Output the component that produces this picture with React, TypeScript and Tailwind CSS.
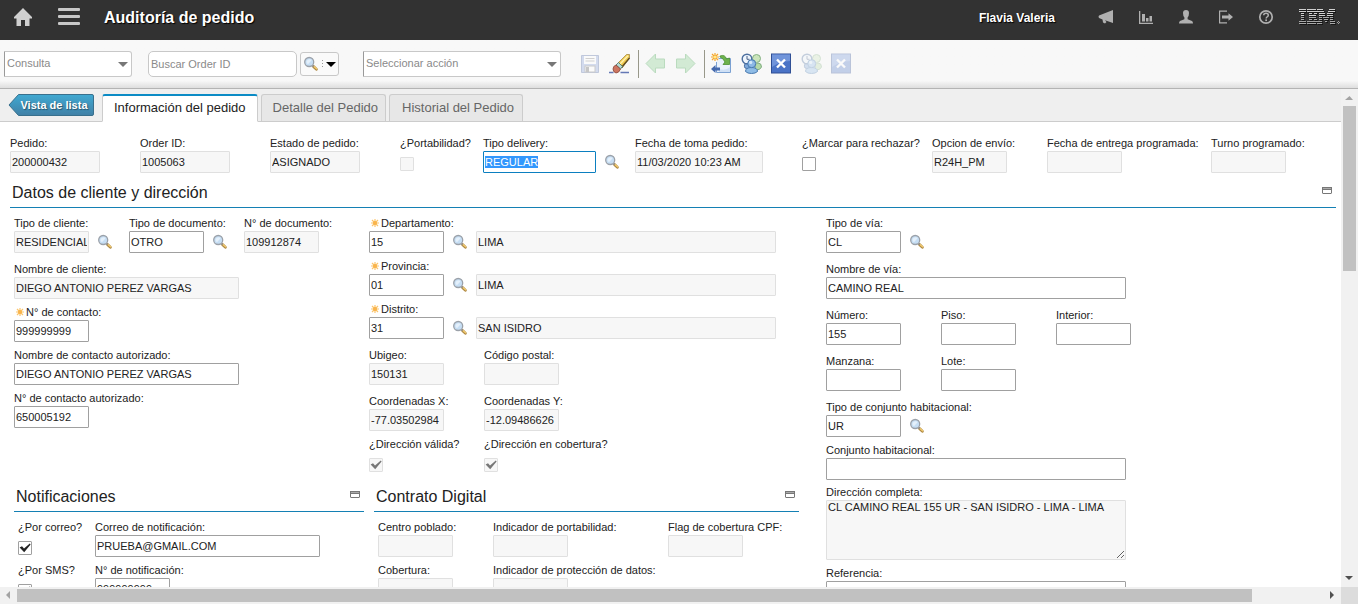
import { useEffect, useId, useRef } from "react";
import type { ReactNode } from "react";

const editable = "border-[#a0a0a0] bg-white";
const locked = "border-[#e0e0e0] bg-[#f7f7f7]";

function Lens() {
  return (
    <svg viewBox="0 0 16 16" className="size-4 shrink-0" aria-hidden="true">
      <path d="M10.6 10.6 L13.4 13.2" stroke="#b08a45" strokeWidth="2.8" strokeLinecap="round" />
      <path d="M11 10.4 L13.6 12.800" stroke="#f3cd72" strokeWidth="1.3" strokeLinecap="round" />
      <path d="M9.4 9.4 L10.6 10.6" stroke="#8a8a8a" strokeWidth="1.6" />
      <circle cx="6.2" cy="6" r="4.500" fill="#c6def4" stroke="#9ba1a9" strokeWidth="1.3" />
      <path d="M3.4 6 A3 3 0 0 1 8.6 4.2 L5 8.2 A3 3 0 0 1 3.4 6Z" fill="#e4f0fb" />
    </svg>
  );
}

function Star() {
  return (
    <svg viewBox="0 0 8 8" className="size-2 shrink-0" aria-hidden="true">
      <path d="M4 0V8M0 4H8M1 1L7 7M7 1L1 7" stroke="#fbc56d" strokeWidth="1.2" />
      <circle cx="4" cy="4" r="2.1" fill="#f9b44c" />
    </svg>
  );
}

type FieldProps = {
  label: string;
  value?: string;
  ro?: boolean;
  req?: boolean;
  lens?: boolean;
  width?: string;
  desc?: string;
  selected?: boolean;
};

function Field({ label, value = "", ro, req, lens, width = "w-[75px]", desc, selected }: FieldProps) {
  const id = useId();
  const ref = useRef<HTMLInputElement>(null);
  useEffect(() => {
    if (selected) {
      ref.current?.focus();
      ref.current?.select();
    }
  }, [selected]);
  return (
    <div>
      <label htmlFor={id} className={`flex h-4 items-center gap-0.5 whitespace-nowrap ${req ? "pl-0.5" : ""}`}>
        {req && <Star />}
        {label}
      </label>
      <div className="flex items-center gap-2">
        <input
          id={id}
          ref={ref}
          defaultValue={value}
          readOnly={ro}
          className={`h-[22px] shrink-0 rounded-[1px] border px-px outline-none selection:bg-[#3297fd] selection:text-white focus:border-[#0b7fc0] ${width} ${ro ? locked : editable}`}
        />
        {lens && (
          <button type="button" aria-label={`Buscar ${label}`}>
            <Lens />
          </button>
        )}
        {desc && (
          <input
            aria-label={`Descripción ${label}`}
            readOnly
            defaultValue={desc}
            className={`h-[22px] w-[300px] shrink-0 rounded-[1px] border px-px outline-none ${locked}`}
          />
        )}
      </div>
    </div>
  );
}

function Check({ label, checked, ro }: { label: string; checked?: boolean; ro?: boolean }) {
  const id = useId();
  return (
    <div>
      <label htmlFor={id} className="flex h-4 items-center whitespace-nowrap">
        {label}
      </label>
      <div className="relative mt-1.5 size-3.5">
        <input
          id={id}
          type="checkbox"
          defaultChecked={checked}
          disabled={ro}
          className={`peer block size-3.5 appearance-none rounded-[1px] border ${ro ? locked : editable}`}
        />
        <svg
          viewBox="0 0 14 14"
          className={`pointer-events-none absolute inset-0 hidden size-3.5 peer-checked:block ${ro ? "text-[#777]" : "text-[#222]"}`}
          aria-hidden="true"
        >
          <path d="M1.6 6.4 L4 5.2 L6 7.4 L11.8 2.4 L12.6 3.4 L6.2 11.2 Z" fill="currentColor" />
        </svg>
      </div>
    </div>
  );
}

function Heading({ children }: { children: ReactNode }) {
  return (
    <div className="flex h-7 justify-between border-b border-[#1480b4] pr-1 pl-0.5">
      <h2 className="text-base leading-[26px]">{children}</h2>
      <button type="button" aria-label="Contraer sección" className="mt-1.5 h-2">
        <svg viewBox="0 0 10 7" className="h-[7px] w-2.5" aria-hidden="true">
          <rect x=".5" y=".5" width="9" height="6" rx=".5" fill="#fff" stroke="#777" />
          <rect x="0" y="0" width="10" height="3" fill="#777" />
          <rect x="1" y="1" width="8" height="1" fill="#aaa" />
        </svg>
      </button>
    </div>
  );
}

function Combo({ label, width }: { label: string; width: string }) {
  return (
    <div className={`relative ${width}`}>
      <select
        aria-label={label}
        className="h-[26px] w-full appearance-none rounded-r-[3px] border border-[#c8c8c8] border-l-[#999] bg-white px-0.5 text-[#8a8a8a] outline-none"
      >
        <option>{label}</option>
      </select>
      <svg viewBox="0 0 10 5" className="pointer-events-none absolute top-[11px] right-1 h-[5px] w-2.5" aria-hidden="true">
        <path d="M0 0H10L5 5Z" fill="#777" />
      </svg>
    </div>
  );
}

function Tool({ label, dim, children }: { label: string; dim?: boolean; children: ReactNode }) {
  return (
    <button type="button" aria-label={label} className={`size-[22px] shrink-0 ${dim ? "opacity-30" : ""}`}>
      <svg viewBox="0 0 22 22" className="size-[22px]" aria-hidden="true">
        {children}
      </svg>
    </button>
  );
}

function People() {
  return (
    <g strokeWidth="1">
      <path d="M14 16 Q14 10 17 10 Q20.500 10 20.500 14 Q19.500 17 15 17Z" fill="#b5d9a8" stroke="#7fae80" />
      <circle cx="15.5" cy="5.5" r="4" fill="#cbe5bb" stroke="#85b183" />
      <path d="M4 15 Q2 11 6 10 L10 12 L8 16Z" fill="#7fa9db" stroke="#4a70a3" />
      <circle cx="6" cy="6" r="4.800" fill="#eef5fd" stroke="#4c6f9f" strokeWidth="1.4" />
      <path d="M6 3V6.3H8.5" fill="none" stroke="#4a6288" />
      <path d="M4.500 18.500 Q4.500 14.500 10.500 14.500 Q16.500 14.500 16.500 18.500 Q14.500 20.500 10.500 20.500 Q6.500 20.500 4.500 18.500Z" fill="#8fbce6" stroke="#4678af" />
      <circle cx="10.7" cy="10.700" r="4" fill="#8db9e6" stroke="#4678af" />
      <circle cx="9.7" cy="9.4" r="1.6" fill="#d3e8fa" />
    </g>
  );
}

function Cross() {
  return (
    <>
      <rect x=".5" y="1" width="19" height="19" fill="#4a73c6" stroke="#2f4f95" />
      <path d="M1 1.500H19V8Q9 8 1 14Z" fill="#7094da" />
      <path d="M6 6.500L14 14.500M14 6.500L6 14.500" stroke="#fff" strokeWidth="2.4" />
    </>
  );
}

const toolArrow = "M1 10.500 L10.500 1 V6 H19.500 V15 H10.500 V20 Z";

function Toolbar() {
  return (
    <div className="flex h-[49px] shrink-0 items-center border-b border-[#b4b4b4] bg-linear-to-b from-[#f8f8f8] from-85% to-[#dedede] pb-px pl-1 text-[11px]">
      <Combo label="Consulta" width="w-32" />
      <input
        aria-label="Buscar Order ID"
        placeholder="Buscar Order ID"
        className="ml-4 h-[26px] w-[149px] rounded-[5px] border border-[#c8c8c8] bg-white px-0.5 outline-none placeholder:text-[#8a8a8a]"
      />
      <button
        type="button"
        aria-label="Opciones de búsqueda"
        className="ml-[3px] flex h-6 w-[39px] items-center justify-between rounded-[3px] border border-[#c8c8c8] bg-[#fafafa] px-0.5"
      >
        <Lens />
        <svg viewBox="0 0 14 8" className="h-2 w-3.5" aria-hidden="true">
          <path d="M.5 0V8" stroke="#999" strokeDasharray="1 2" />
          <path d="M4 2H14L9 7Z" fill="#000" />
        </svg>
      </button>
      <div className="ml-6 flex">
        <Combo label="Seleccionar acción" width="w-[198px]" />
      </div>
      <div className="ml-[18px] flex items-center gap-2">
        <Tool label="Guardar" dim>
          <path d="M2.500 2.500H19.500V19.500H2.500Z" fill="#7f9cd8" stroke="#415c9c" />
          <rect x="5" y="3" width="12" height="8" fill="#fff" />
          <path d="M6.500 5.500H15.500M6.500 8H15.500" stroke="#777" />
          <rect x="6" y="13" width="10" height="6" fill="#fff" stroke="#666" />
          <rect x="7" y="14" width="3" height="5" fill="#555" />
        </Tool>
        <Tool label="Borrar">
          <path d="M0 19.500H4.500M11.500 19.500H20" stroke="#6478b5" strokeWidth="1.4" />
          <path d="M9 10 L17.500 1.500 L20.500 1.500 L20.500 5 L13 15Z" fill="#f0cb52" stroke="#9b8038" strokeWidth=".7" />
          <path d="M11 11L19 2.800" stroke="#fff3b0" strokeWidth="1.4" />
          <path d="M12.500 14.500L20.500 5" stroke="#5f4c22" strokeWidth="1.4" />
          <path d="M7 12 L9.500 9.500 L13.500 13.500 L11.500 16Z" fill="#b5dcd4" stroke="#456b66" strokeWidth=".8" />
          <path d="M4 16 Q4 13 7 12 L11.500 16 Q10 20 7 20 Q4 19 4 16Z" fill="#cd7560" stroke="#86463a" strokeWidth=".8" />
        </Tool>
      </div>
      <div className="ml-[7px] h-7 w-px bg-[#98988a]" />
      <div className="ml-1.5 flex gap-2">
        <Tool label="Anterior" dim>
          <path d={toolArrow} fill="#7ccb82" stroke="#2d9a3c" strokeWidth="1" />
        </Tool>
        <Tool label="Siguiente" dim>
          <g transform="translate(21 0) scale(-1 1)">
            <path d={toolArrow} fill="#7ccb82" stroke="#2d9a3c" strokeWidth="1" />
          </g>
        </Tool>
      </div>
      <div className="ml-[7px] h-7 w-px bg-[#98988a]" />
      <div className="ml-1.5 flex gap-2">
        <Tool label="Reasignar">
          <path d="M7.500 5.500H19.500V19.500H5.500V9" fill="#eaf2fc" stroke="#7ba1d2" />
          <path d="M8 19H19V14Q15 18 8 16Z" fill="#cfe0f5" />
          <path d="M9 3 Q14 1 15.500 6 L18.500 5 V11.500 H12 L14 9 Q12 5 9 4Z" fill="#6db24c" stroke="#4d9134" strokeWidth=".8" />
          <path d="M0 16 L4.500 12 V14.500 H9 V17.500 H4.500 V20Z" fill="#4469ad" />
          <path d="M4 0V8M0 4H8M1 1L7 7M7 1L1 7" stroke="#f5a52b" strokeWidth="1.2" />
          <circle cx="4" cy="4" r="1.6" fill="#ffe98a" />
        </Tool>
        <Tool label="Asignar personas">
          <People />
        </Tool>
        <Tool label="Cancelar">
          <Cross />
        </Tool>
        <Tool label="Liberar personas" dim>
          <People />
        </Tool>
        <Tool label="Rechazar" dim>
          <Cross />
        </Tool>
      </div>
    </div>
  );
}

const logoRows: [number, number][][] = [
  [[0, 7], [8, 9], [18, 6], [30, 6]],
  [[0, 7], [8, 10], [18, 7], [29, 7]],
  [[2, 3], [10, 3], [15, 3], [20, 6], [28, 6]],
  [[2, 3], [10, 7], [20, 6], [28, 6]],
  [[2, 3], [10, 7], [20, 3], [24, 6], [31, 3]],
  [[2, 3], [10, 3], [15, 3], [20, 3], [25, 4], [31, 3]],
  [[0, 7], [8, 10], [18, 5], [26, 2], [31, 5]],
  [[0, 7], [8, 9], [18, 5], [31, 5]],
];

function HeaderIcon({ label, children }: { label: string; children: ReactNode }) {
  return (
    <button type="button" aria-label={label} className="size-4">
      <svg viewBox="0 0 16 16" className="size-4" fill="#b0b0b0" aria-hidden="true">
        {children}
      </svg>
    </button>
  );
}

function Header() {
  return (
    <header className="flex h-10 shrink-0 items-center justify-between bg-[#323232] pb-1.5 text-white">
      <div className="flex items-center pl-3.5">
        <button type="button" aria-label="Inicio">
          <svg viewBox="0 0 18 18" className="size-[18px]" fill="#d0d0d0" aria-hidden="true">
            <path d="M9 0 L18 9 V10.500 H15.500 V18 H11 V12 H7 V18 H2.500 V10.500 H0 V9Z" />
          </svg>
        </button>
        <button type="button" aria-label="Menú" className="ml-[26px]">
          <svg viewBox="0 0 22 18" className="h-[18px] w-[22px]" fill="#c8c8c8" aria-hidden="true">
            <rect width="22" height="3" rx="1" />
            <rect y="7" width="22" height="3" rx="1" />
            <rect y="14" width="22" height="3" rx="1" />
          </svg>
        </button>
        <h1 className="ml-6 pt-0.5 text-base font-bold [text-shadow:1px_1px_1px_#000]">Auditoría de pedido</h1>
      </div>
      <div className="flex items-center pr-[18px]">
        <span className="mr-[43px] pt-0.5 text-xs font-bold [text-shadow:1px_1px_1px_#000]">Flavia Valeria</span>
        <div className="flex gap-6">
          <HeaderIcon label="Boletines">
            <path d="M15 1V14L7 11.2L8.500 13L7 14.500L5 13.500L4.500 10.500L1 9Q0 7.500 1 6.500Z" />
          </HeaderIcon>
          <HeaderIcon label="Informes">
            <path d="M1 2H2.300V13.700H15V15H1ZM4 5H7V12.500H4ZM8 9H10.500V12.500H8ZM11.500 7H14V12.500H11.500Z" />
          </HeaderIcon>
          <HeaderIcon label="Perfil">
            <path d="M8 1Q11 1 11 4Q11 7 9.600 8.500V10.300L14 12Q15 12.500 15 14.500H1Q1 12.500 2 12L6.400 10.300V8.500Q5 7 5 4Q5 1 8 1Z" />
          </HeaderIcon>
          <HeaderIcon label="Cerrar sesión">
            <path d="M1 1.500H9V2.800H2.200V13.200H9V14.500H1ZM4 6.500H10.500V4.200L15 8L10.500 11.800V9.500H4Z" />
          </HeaderIcon>
          <HeaderIcon label="Ayuda">
            <circle cx="8" cy="8" r="6.2" fill="none" stroke="#b0b0b0" strokeWidth="1.7" />
            <path d="M5.700 6.300Q5.800 4.300 8 4.300Q10.300 4.300 10.300 6.200Q10.300 7.200 9.200 7.900Q8.200 8.400 8.200 9.400" fill="none" stroke="#b0b0b0" strokeWidth="1.500" />
            <rect x="7.3" y="10.4" width="1.7" height="1.7" />
          </HeaderIcon>
        </div>
        <svg viewBox="0 0 41 16" className="ml-[25px] h-4 w-[41px]" role="img" aria-label="IBM" shapeRendering="crispEdges">
          {logoRows.map((row, y) =>
            row.map(([x, w]) => (
              <g key={`${y}-${x}`}>
                <rect x={x + 1} y={y * 2 + 1} width={w} height="1" fill="#161616" />
                <rect x={x} y={y * 2} width={w} height="1" fill={y < 4 ? "#d0d0d0" : "#a8a8a8"} />
              </g>
            )),
          )}
          <path d="M39 12h1v1h1v1h-1v1h-1v-1h-1v-1h1z" fill="#a0a0a0" />
          <rect x="39" y="13" width="1" height="1" fill="#323232" />
        </svg>
      </div>
    </header>
  );
}

function Tabs() {
  return (
    <nav className="flex h-[33px] shrink-0 border-b border-[#cccccc] bg-[#efefef] pl-2">
      <button type="button" className="relative mt-[5px] h-[22px] w-[86px] pl-1.5 text-[11px] font-bold text-white">
        <svg viewBox="0 0 86 22" className="absolute inset-0 h-[22px] w-[86px]" aria-hidden="true">
          <defs>
            <linearGradient id="back" x2="0" y2="1">
              <stop stopColor="#40a9d2" />
              <stop offset="1" stopColor="#4180a6" />
            </linearGradient>
          </defs>
          <path d="M1 11 L10.500 .5 H84 Q85.500 .5 85.500 2 V20 Q85.500 21.500 84 21.500 H10.500Z" fill="url(#back)" stroke="#39708d" />
        </svg>
        <span className="relative [text-shadow:1px_1px_1px_#27566f]">Vista de lista</span>
      </button>
      <div className="mt-[5px] ml-2 flex items-stretch gap-[3px] text-[13px] text-[#666]" role="tablist">
        <button type="button" role="tab" aria-selected="true" className="-mb-px rounded-t-[3px] border border-t-2 border-[#ccc] border-t-[#0b8bc5] border-b-white bg-white px-[11px] pb-0.5 text-[#222]">
          Información del pedido
        </button>
        <button type="button" role="tab" aria-selected="false" className="rounded-t-[3px] border border-b-0 border-[#ccc] bg-[#e7e7e7] pr-[7px] pb-px pl-[11px]">
          Detalle del Pedido
        </button>
        <button type="button" role="tab" aria-selected="false" className="rounded-t-[3px] border border-b-0 border-[#ccc] bg-[#e7e7e7] pr-2 pb-px pl-3">
          Historial del Pedido
        </button>
      </div>
    </nav>
  );
}

function ClientColumn() {
  return (
    <div className="flex flex-col gap-[5px]">
      <div className="mb-[3px] flex">
        <div className="w-[115px]"><Field label="Tipo de cliente:" value="RESIDENCIAL" ro lens /></div>
        <div className="w-[115px]"><Field label="Tipo de documento:" value="OTRO" lens /></div>
        <Field label="N° de documento:" value="109912874" ro />
      </div>
      <Field label="Nombre de cliente:" value="DIEGO ANTONIO PEREZ VARGAS" ro width="w-[225px]" />
      <Field label="N° de contacto:" value="999999999" req />
      <Field label="Nombre de contacto autorizado:" value="DIEGO ANTONIO PEREZ VARGAS" width="w-[225px]" />
      <Field label="N° de contacto autorizado:" value="650005192" />
    </div>
  );
}

function PlaceColumn() {
  return (
    <div className="flex flex-col gap-[5px]">
      <Field label="Departamento:" value="15" req lens desc="LIMA" />
      <Field label="Provincia:" value="01" req lens desc="LIMA" />
      <Field label="Distrito:" value="31" req lens desc="SAN ISIDRO" />
      <div className="mt-[3px] grid grid-cols-[115px_1fr] gap-y-2">
        <Field label="Ubigeo:" value="150131" ro />
        <Field label="Código postal:" ro />
        <Field label="Coordenadas X:" value="-77.03502984" ro />
        <Field label="Coordenadas Y:" value="-12.09486626" ro />
      </div>
      <div className="grid grid-cols-[115px_1fr]">
        <Check label="¿Dirección válida?" checked ro />
        <Check label="¿Dirección en cobertura?" checked ro />
      </div>
    </div>
  );
}

function AddressColumn() {
  const id = useId();
  return (
    <div className="flex flex-col gap-[5px]">
      <div className="mb-[3px] flex flex-col gap-2">
        <Field label="Tipo de vía:" value="CL" lens />
        <Field label="Nombre de vía:" value="CAMINO REAL" width="w-[300px]" />
        <div className="grid grid-cols-[115px_115px_1fr] gap-y-2">
          <Field label="Número:" value="155" />
          <Field label="Piso:" />
          <Field label="Interior:" />
          <Field label="Manzana:" />
          <Field label="Lote:" />
        </div>
      </div>
      <Field label="Tipo de conjunto habitacional:" value="UR" lens />
      <Field label="Conjunto habitacional:" width="w-[300px]" />
      <div>
        <label htmlFor={id} className="flex h-[15px] items-center">Dirección completa:</label>
        <textarea
          id={id}
          readOnly
          defaultValue="CL CAMINO REAL 155 UR - SAN ISIDRO - LIMA - LIMA"
          className={`block h-[60px] w-[300px] rounded-[1px] border px-px leading-[13px] outline-none ${locked}`}
        />
      </div>
      <Field label="Referencia:" width="w-[300px]" />
    </div>
  );
}

function Arrow({ d, dark }: { d: string; dark?: boolean }) {
  return (
    <svg viewBox="0 0 17 17" className="size-[17px] shrink-0" aria-hidden="true">
      <path d={d} fill={dark ? "#505050" : "#a3a3a3"} />
    </svg>
  );
}

export default function App() {
  return (
    <div className="flex h-screen flex-col overflow-hidden bg-white pb-px font-['Liberation_Sans',Arial,sans-serif] text-[11px] text-[#222]">
      <Header />
      <Toolbar />
      <div className="flex min-h-0 flex-1">
        <div className="flex min-w-0 flex-1 flex-col">
          <Tabs />
          <main className="min-h-0 flex-1 overflow-hidden pt-[13px] pr-[5px] pl-2.5">
            <div className="grid grid-cols-[130px_130px_130px_83px_152px_167px_130px_115px_164px_1fr]">
              <Field label="Pedido:" value="200000432" ro width="w-[90px]" />
              <Field label="Order ID:" value="1005063" ro width="w-[90px]" />
              <Field label="Estado de pedido:" value="ASIGNADO" ro width="w-[90px]" />
              <Check label="¿Portabilidad?" ro />
              <Field label="Tipo delivery:" value="REGULAR" lens selected width="w-[113px]" />
              <Field label="Fecha de toma pedido:" value="11/03/2020 10:23 AM" ro width="w-32" />
              <Check label="¿Marcar para rechazar?" />
              <Field label="Opcion de envío:" value="R24H_PM" ro />
              <Field label="Fecha de entrega programada:" ro />
              <Field label="Turno programado:" ro />
            </div>
            <section className="mt-[7px]">
              <Heading>Datos de cliente y dirección</Heading>
              <div className="grid grid-cols-[812px_1fr] px-1 pt-[7px]">
                <div>
                  <div className="grid grid-cols-[355px_1fr]">
                    <ClientColumn />
                    <PlaceColumn />
                  </div>
                  <div className="mt-3 grid grid-cols-[350px_425px] gap-2.5">
                    <section>
                      <Heading>Notificaciones</Heading>
                      <div className="grid grid-cols-[77px_1fr] gap-y-[5px] px-1 pt-[7px]">
                        <Check label="¿Por correo?" checked />
                        <Field label="Correo de notificación:" value="PRUEBA@GMAIL.COM" width="w-[225px]" />
                        <Check label="¿Por SMS?" checked />
                        <Field label="N° de notificación:" value="999999999" />
                      </div>
                    </section>
                    <section>
                      <Heading>Contrato Digital</Heading>
                      <div className="grid grid-cols-[115px_175px_1fr] gap-y-[5px] px-1 pt-[7px]">
                        <Field label="Centro poblado:" ro />
                        <Field label="Indicador de portabilidad:" ro />
                        <Field label="Flag de cobertura CPF:" ro />
                        <Field label="Cobertura:" ro />
                        <Field label="Indicador de protección de datos:" ro />
                      </div>
                    </section>
                  </div>
                </div>
                <AddressColumn />
              </div>
            </section>
          </main>
        </div>
        <div className="flex w-[17px] shrink-0 flex-col items-center bg-[#f1f1f1]" aria-hidden="true">
          <Arrow d="M4 11L8.500 7L12 11Z" />
          <div className="h-[165px] w-[13px] bg-[#c1c1c1]" />
          <div className="flex-1" />
          <Arrow d="M4 6H12L8 10Z" dark />
        </div>
      </div>
      <div className="flex h-[17px] shrink-0 items-center bg-[#f1f1f1]" aria-hidden="true">
        <Arrow d="M10 4V12L6 8Z" />
        <div className="flex h-[13px] flex-1">
          <div className="w-[94.500%] bg-[#c1c1c1]" />
        </div>
        <Arrow d="M6 4V12L10 8Z" dark />
        <div className="h-full w-[17px] bg-[#dcdcdc]" />
      </div>
    </div>
  );
}
